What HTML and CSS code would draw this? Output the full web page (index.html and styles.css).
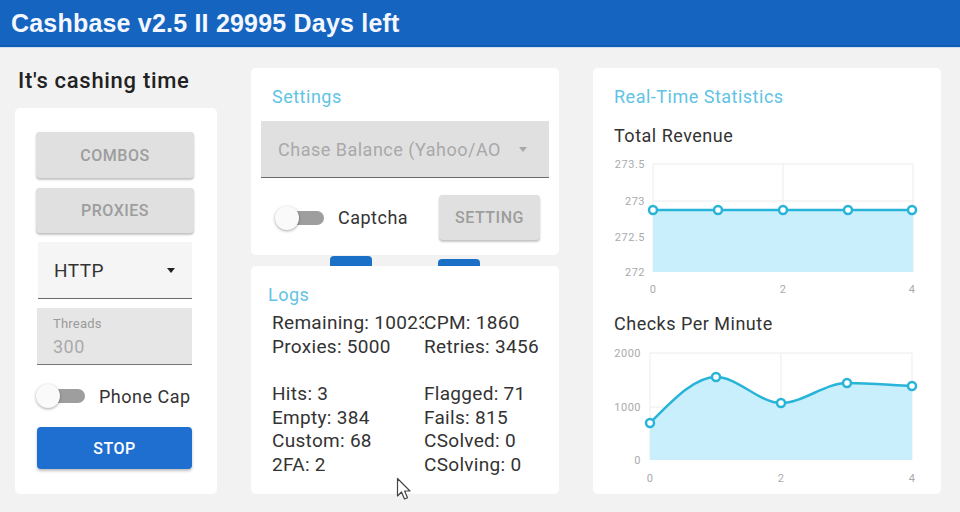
FILE: index.html
```html
<!DOCTYPE html>
<html lang="en">
<head>
<meta charset="utf-8">
<title>Cashbase</title>
<link rel="stylesheet" href="styles.css">
</head>
<body>
<header class="topbar"><h1 class="app-title">Cashbase v2.5 II 29995 Days left</h1></header>
<main class="layout">
  <section class="col-left">
    <h2 class="tagline">It's cashing time</h2>
    <div class="card controls">
      <button class="btn btn-gray combos">COMBOS</button>
      <button class="btn btn-gray proxies">PROXIES</button>
      <div class="select http"><span class="select-text">HTTP</span><span class="caret dark"></span></div>
      <div class="field threads"><span class="field-label">Threads</span><span class="field-value">300</span></div>
      <div class="switch-row"><span class="switch"><span class="track"></span><span class="thumb"></span></span><span class="switch-label">Phone Cap</span></div>
      <button class="btn btn-blue stop">STOP</button>
    </div>
  </section>
  <section class="col-mid">
    <div class="card settings">
      <h3 class="card-title">Settings</h3>
      <div class="select mode"><span class="select-text muted">Chase Balance (Yahoo/AO</span><span class="caret light"></span></div>
      <div class="switch-row captcha-row"><span class="switch"><span class="track"></span><span class="thumb"></span></span><span class="switch-label">Captcha</span><button class="btn btn-gray setting">SETTING</button></div>
    </div>
    <div class="tabs"><span class="tab tab-a"></span><span class="tab tab-b"></span></div>
    <div class="card logs">
      <h3 class="card-title logs-title">Logs</h3>
      <div class="log-grid">
        <span class="cell clip">Remaining: 10023</span><span class="cell">CPM: 1860</span>
        <span class="cell">Proxies: 5000</span><span class="cell">Retries: 3456</span>
        <span class="cell gap"></span><span class="cell gap"></span>
        <span class="cell">Hits: 3</span><span class="cell">Flagged: 71</span>
        <span class="cell">Empty: 384</span><span class="cell">Fails: 815</span>
        <span class="cell">Custom: 68</span><span class="cell">CSolved: 0</span>
        <span class="cell">2FA: 2</span><span class="cell">CSolving: 0</span>
      </div>
    </div>
  </section>
  <section class="card stats">
    <h3 class="card-title">Real-Time Statistics</h3>
    <h4 class="chart-title first">Total Revenue</h4>
    <svg class="chart" width="330" height="143" viewBox="0 0 330 143">
      <g class="grid">
        <line x1="53" y1="9" x2="313" y2="9"/>
        <line x1="53" y1="46" x2="313" y2="46"/>
        <line x1="53" y1="82" x2="313" y2="82"/>
        <line x1="53" y1="9" x2="53" y2="117"/>
        <line x1="183" y1="9" x2="183" y2="117"/>
        <line x1="313" y1="9" x2="313" y2="117"/>
      </g>
      <path class="area" d="M53,55 L313,55 L313,117 L53,117 Z"/>
      <path class="line" d="M53,55 L313,55"/>
      <g class="dots">
        <circle cx="53" cy="55" r="4"/><circle cx="118" cy="55" r="4"/><circle cx="183" cy="55" r="4"/><circle cx="248" cy="55" r="4"/><circle cx="312" cy="55" r="4"/>
      </g>
      <g class="ylab">
        <text x="45" y="13">273.5</text><text x="45" y="50">273</text><text x="45" y="86">272.5</text><text x="45" y="121">272</text>
      </g>
      <g class="xlab">
        <text x="53" y="138">0</text><text x="183" y="138">2</text><text x="312" y="138">4</text>
      </g>
    </svg>
    <h4 class="chart-title second">Checks Per Minute</h4>
    <svg class="chart" width="330" height="143" viewBox="0 0 330 143">
      <g class="grid">
        <line x1="50" y1="10" x2="312" y2="10"/>
        <line x1="50" y1="64" x2="312" y2="64"/>
        <line x1="50" y1="10" x2="50" y2="117"/>
        <line x1="181" y1="10" x2="181" y2="117"/>
        <line x1="312" y1="10" x2="312" y2="117"/>
      </g>
      <path class="area" d="M50,80 C72,58 94,34 116,34 C138,34 159,60 181,60 C203,60 225,40 247,40 C269,40 290,42 312,43 L312,117 L50,117 Z"/>
      <path class="line" d="M50,80 C72,58 94,34 116,34 C138,34 159,60 181,60 C203,60 225,40 247,40 C269,40 290,42 312,43"/>
      <g class="dots">
        <circle cx="50" cy="80" r="4"/><circle cx="116" cy="34" r="4"/><circle cx="181" cy="60" r="4"/><circle cx="247" cy="40" r="4"/><circle cx="312" cy="43" r="4"/>
      </g>
      <g class="ylab">
        <text x="41" y="14">2000</text><text x="41" y="68">1000</text><text x="41" y="121">0</text>
      </g>
      <g class="xlab">
        <text x="50" y="139">0</text><text x="181" y="139">2</text><text x="312" y="139">4</text>
      </g>
    </svg>
  </section>
</main>
<svg class="cursor" width="18" height="26" viewBox="0 0 18 26"><path d="M1.5,1.5 L1.5,19 L5.5,15 L8.5,22 L11.5,20.8 L8.6,14 L14,14 Z" fill="#fff" stroke="#444" stroke-width="1.2" stroke-linejoin="round"/></svg>
</body>
</html>
```

FILE: styles.css
```css
* { box-sizing: border-box; }
html, body { margin: 0; padding: 0; }
body {
  width: 960px;
  height: 512px;
  overflow: hidden;
  background: #f2f2f2;
  font-family: Roboto, "Noto Sans", sans-serif;
  letter-spacing: .5px;
  color: #333;
  position: relative;
}
.topbar {
  height: 47px;
  background: #1565c0;
  border-bottom: 2px solid #115bb0;
  box-shadow: 0 1px 0 #cfe0f3;
}
.app-title {
  margin: 0;
  padding-left: 11px;
  font-family: "Liberation Sans", Arial, sans-serif;
  font-weight: bold;
  font-size: 25px;
  letter-spacing: .2px;
  line-height: 46px;
  color: #f4f7ff;
}
.layout {
  display: flex;
  gap: 34px;
  height: 465px;
  padding: 21px 19px 18px 15px;
}
.card {
  background: #fff;
  border-radius: 5px;
}
.col-left {
  width: 202px;
  display: flex;
  flex-direction: column;
}
.tagline {
  margin: 0 0 14px 3px;
  font-size: 22px;
  font-weight: 500;
  letter-spacing: .7px;
  line-height: 26px;
  color: #222;
  white-space: nowrap;
}
.controls {
  flex: 1;
  display: flex;
  flex-direction: column;
  padding: 24px 23px 25px 21px;
}
.btn {
  border: 0;
  border-radius: 4px;
  font-family: Roboto, sans-serif;
  font-weight: 500;
  font-size: 16px;
  letter-spacing: .5px;
  padding: 0;
  cursor: pointer;
}
.btn-gray {
  background: #e0e0e0;
  color: #9d9d9d;
  box-shadow: 0 2px 2px rgba(0,0,0,.22), 0 0 1px rgba(0,0,0,.12);
}
.btn-blue {
  background: #1e6fcf;
  color: #fff;
  box-shadow: 0 2px 3px rgba(0,0,0,.25);
}
.combos { height: 46px; margin-bottom: 10px; }
.proxies { height: 45px; margin-bottom: 9px; }
.select {
  display: flex;
  align-items: center;
  border-bottom: 1px solid #6a6a6a;
}
.http {
  height: 57px;
  width: 154px;
  margin: 0 0 9px 2px;
  padding: 0 17px 0 16px;
  background: #f5f5f5;
}
.select-text { flex: 1; font-size: 18px; white-space: nowrap; overflow: hidden; }
.http .select-text { font-size: 19px; color: #333; }
.caret {
  width: 0; height: 0;
  border-left: 4.5px solid transparent;
  border-right: 4.5px solid transparent;
  border-top: 5px solid #222;
}
.caret.light { border-top-color: #a8a8a8; }
.field {
  height: 57px;
  width: 155px;
  margin-left: 1px;
  padding: 8px 0 0 16px;
  background: #e6e6e6;
  border-bottom: 1px solid #777;
  display: flex;
  flex-direction: column;
}
.field-label { font-size: 13px; line-height: 16px; color: #9a9a9a; letter-spacing: .2px; }
.field-value { font-size: 18px; line-height: 30px; color: #aaa; }
.switch-row {
  display: flex;
  align-items: center;
  margin-top: 19px;
  height: 24px;
}
.switch {
  position: relative;
  width: 49px;
  height: 24px;
  flex: none;
}
.track {
  position: absolute;
  left: 12px; top: 5px;
  width: 37px; height: 14px;
  border-radius: 7px;
  background: #9e9e9e;
}
.thumb {
  position: absolute;
  left: 0; top: 0;
  width: 24px; height: 24px;
  border-radius: 50%;
  background: #fafafa;
  box-shadow: 0 1px 3px rgba(0,0,0,.35);
}
.switch-label { margin-left: 14px; font-size: 18px; color: #333; white-space: nowrap; }
.stop { margin: 19px 0 0 1px; width: 155px; height: 42px; }

.col-mid {
  width: 308px;
  display: flex;
  flex-direction: column;
}
.card-title {
  margin: 0;
  font-size: 18px;
  font-weight: 400;
  line-height: 22px;
  color: #5fc3e4;
}
.settings {
  height: 187px;
  padding: 18px 10px 15px 10px;
}
.settings .card-title { margin-left: 11px; }
.mode {
  margin-top: 13px;
  height: 57px;
  padding: 0 22px 0 17px;
  background: #e0e0e0;
}
.muted { color: #a9a9a9; }
.captcha-row { margin: 17px 0 0 14px; height: 45px; }
.setting { margin-left: auto; margin-right: 9px; width: 101px; height: 45px; }
.tabs {
  height: 11px;
  display: flex;
  align-items: flex-end;
}
.tab { background: #1a6fc6; border-radius: 4px 4px 0 0; width: 42px; }
.tab-a { height: 10px; margin-left: 79px; }
.tab-b { height: 7px; margin-left: 66px; }
.logs {
  flex: 1;
  padding: 18px 10px 0 17px;
}
.log-grid {
  margin: 5px 0 0 4px;
  display: grid;
  grid-template-columns: 152px auto;
  font-size: 19px;
  letter-spacing: .3px;
  line-height: 23.6px;
  color: #333;
}
.cell { white-space: nowrap; }
.cell.gap { height: 24px; }
.clip { overflow: hidden; }

.stats {
  width: 348px;
  padding: 18px 10px 0 21px;
}
.chart-title {
  margin: 0;
  font-size: 18px;
  font-weight: 400;
  line-height: 22px;
  color: #333;
}
.chart-title.first { margin-top: 17px; }
.chart-title.second { margin-top: 15px; }
.chart { display: block; margin: 8px 0 0 -14px; }
.grid line { stroke: #ececec; stroke-width: 1; }
.area { fill: #c9effc; }
.line { fill: none; stroke: #27b4d8; stroke-width: 2.5; }
.dots circle { fill: #fff; stroke: #27b4d8; stroke-width: 2.5; }
.ylab text { font-family: Roboto, sans-serif; font-size: 11px; fill: #aaa; text-anchor: end; }
.xlab text { font-family: Roboto, sans-serif; font-size: 11px; fill: #aaa; text-anchor: middle; }
.cursor { position: absolute; left: 396px; top: 477px; }
```
